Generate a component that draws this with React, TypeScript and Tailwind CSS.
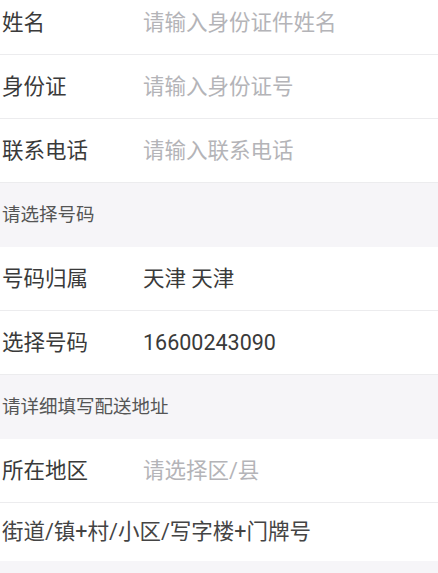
import React from "react";

const font = { fontFamily: 'Roboto, "Noto Sans CJK SC", "Noto Sans", sans-serif' };

function Row({ label, value, placeholder }: { label: string; value?: string; placeholder?: string }) {
  return (
    <div className="flex h-[64px] items-center border-b border-[#ececee] bg-white pl-[2px]">
      <div className="w-[141px] shrink-0 text-[21.5px] leading-none text-[#3a3a3a]">{label}</div>
      {value ? (
        <div className="text-[21.5px] leading-none text-[#3a3a3a]">{value}</div>
      ) : (
        <div className="text-[21.5px] leading-none text-[#b4b4b8]">{placeholder}</div>
      )}
    </div>
  );
}

function Header({ text }: { text: string }) {
  return (
    <div className="flex h-[64px] items-center bg-[#f6f5f8] pl-[2px]">
      <div className="text-[18.5px] leading-none text-[#555]">{text}</div>
    </div>
  );
}

export default function App() {
  return (
    <div className="h-[573px] w-[438px] overflow-hidden bg-[#f6f5f8]" style={font}>
      <div className="-mt-[9px]">
        <Row label="姓名" placeholder="请输入身份证件姓名" />
        <Row label="身份证" placeholder="请输入身份证号" />
        <Row label="联系电话" placeholder="请输入联系电话" />
        <Header text="请选择号码" />
        <Row label="号码归属" value="天津 天津" />
        <Row label="选择号码" value="16600243090" />
        <Header text="请详细填写配送地址" />
        <Row label="所在地区" placeholder="请选择区/县" />
        <div className="flex h-[58px] items-center bg-white pl-[2px]">
          <div className="text-[21.5px] leading-none text-[#444]">街道/镇+村/小区/写字楼+门牌号</div>
        </div>
      </div>
    </div>
  );
}
